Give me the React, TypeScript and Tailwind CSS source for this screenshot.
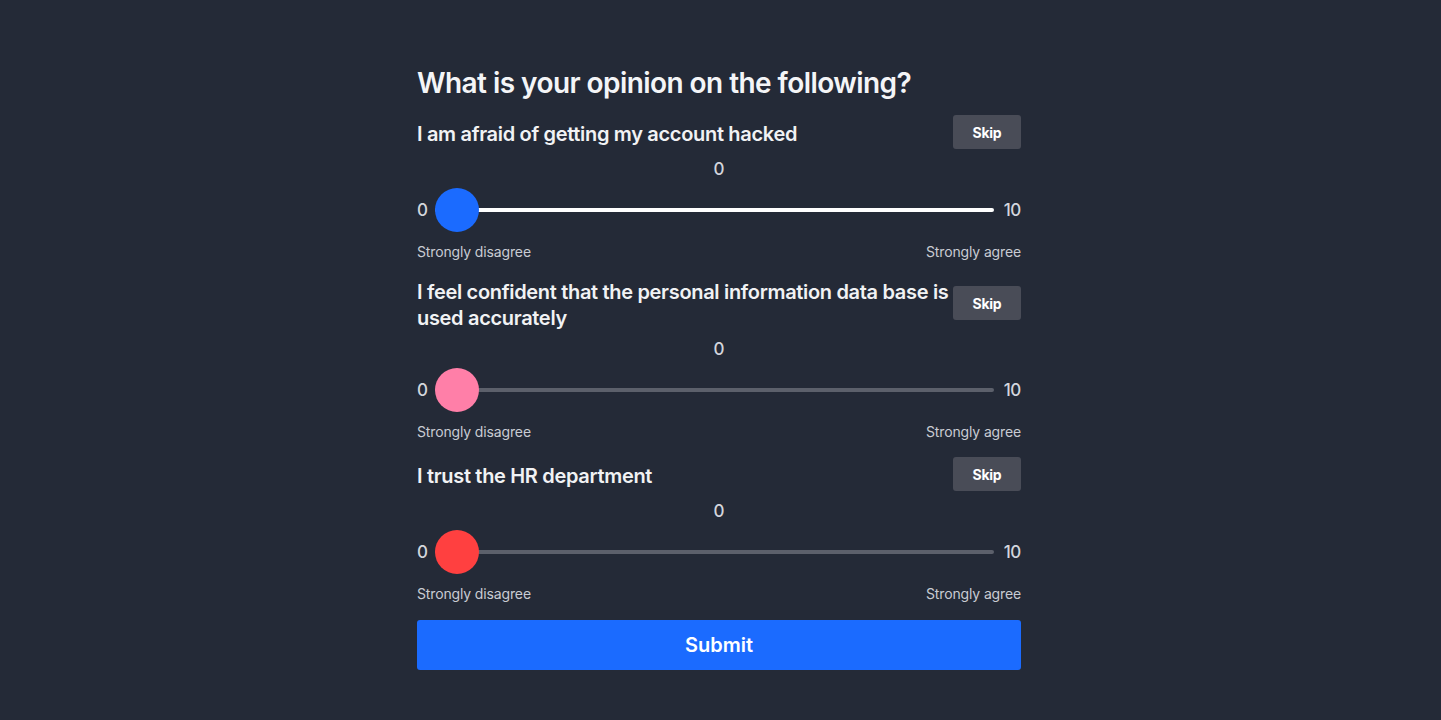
import React, { useState } from "react";

type Question = {
  id: string;
  text: string;
  thumb: string;
  track: string;
};

const questions: Question[] = [
  {
    id: "hacked",
    text: "I am afraid of getting my account hacked",
    thumb: "bg-[#1b6bff]",
    track: "bg-white",
  },
  {
    id: "database",
    text: "I feel confident that the personal information data base is used accurately",
    thumb: "bg-[#ff7fa8]",
    track: "bg-[#5c606b]",
  },
  {
    id: "hr",
    text: "I trust the HR department",
    thumb: "bg-[#ff4040]",
    track: "bg-[#5c606b]",
  },
];

const OpinionSlider = ({ q }: { q: Question }) => {
  const [value] = useState(0);

  return (
    <div className="flex flex-col">
      {/* Question header */}
      <div className="flex items-center justify-between min-h-[34px]">
        <h3 className="translate-y-[2px] text-[20px] leading-[26px] font-semibold text-[#f1f2f4] tracking-[-0.016em]">
          {q.text}
        </h3>
        <button
          type="button"
          className="shrink-0 w-[68px] h-[34px] rounded-[3px] bg-[#494c57] text-white text-[14px] font-bold tracking-[-0.02em]"
        >
          Skip
        </button>
      </div>

      {/* Current value */}
      <div className="mt-2 h-6 leading-6 text-center text-[17px] font-medium text-[#d3d6dc]">
        {value}
      </div>

      {/* Slider */}
      <div className="mt-[6px] h-[46px] flex items-center gap-2">
        <span className="w-[10px] text-[17px] font-medium text-[#d3d6dc] translate-y-px">0</span>
        <div className="relative flex-1 h-[46px] flex items-center mr-[2px]">
          <div className={`w-full h-1 rounded-full ${q.track}`} />
          <div
            className={`absolute left-0 top-[1px] w-11 h-11 rounded-full ${q.thumb}`}
          />
        </div>
        <span className="text-[17px] font-medium text-[#d3d6dc] tracking-[-0.02em] translate-y-px">10</span>
      </div>

      {/* Scale labels */}
      <div className="mt-2 h-5 flex items-center justify-between text-[14px] text-[#c9ccd3] tracking-[-0.01em]">
        <span>Strongly disagree</span>
        <span>Strongly agree</span>
      </div>
    </div>
  );
};

export default function App() {
  return (
    <div
      className="min-h-screen w-full bg-[#242a37] flex justify-center pr-[3px]"
      style={{ fontFamily: "Inter, 'Liberation Sans', sans-serif" }}
    >
      <div className="w-[604px] pt-16 flex flex-col gap-4">
        <h1 className="h-[35px] leading-[39px] text-[28px] font-semibold text-[#f4f5f7] tracking-[-0.02em]">
          What is your opinion on the following?
        </h1>

        {questions.map((q) => (
          <OpinionSlider key={q.id} q={q} />
        ))}

        <button
          type="submit"
          className="mt-px h-[50px] w-full rounded-[3px] bg-[#1b6bff] text-white text-[20px] font-semibold"
        >
          Submit
        </button>
      </div>
    </div>
  );
}
